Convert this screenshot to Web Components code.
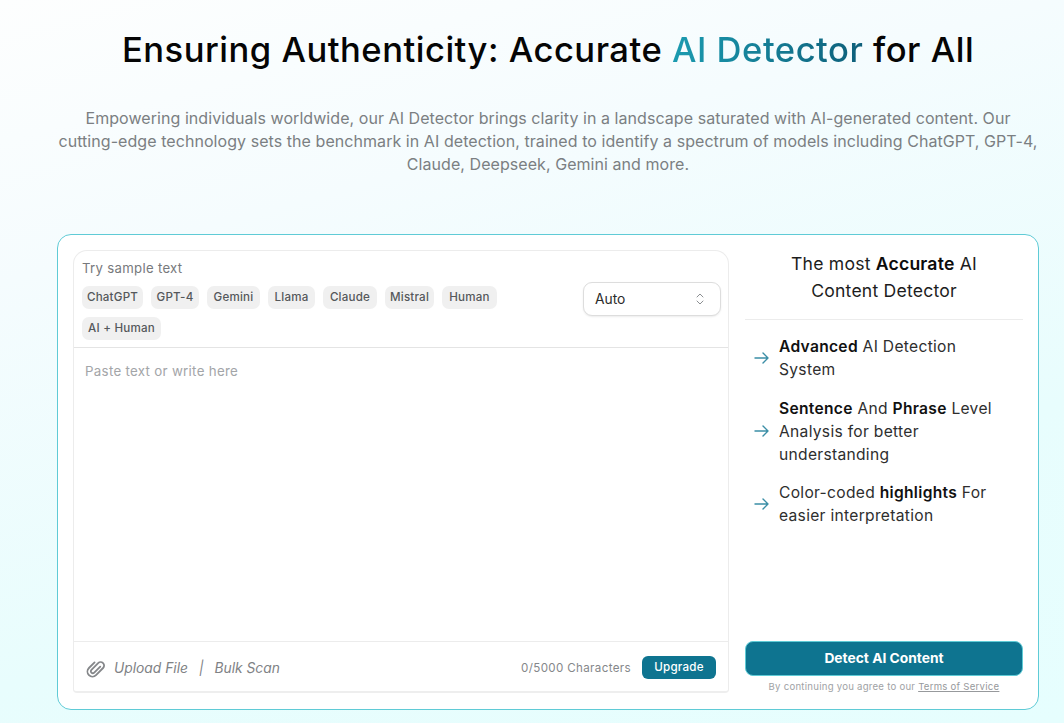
<!DOCTYPE html>
<html lang="en">
<head>
<meta charset="utf-8">
<title>AI Detector</title>
<style>
  html, body { margin: 0; height: 100%; }
  body {
    overflow: hidden;
    font-family: Inter, "Liberation Sans", sans-serif;
    background: linear-gradient(165deg, #fdfefe 0%, #f5fcfe 28%, #e8fdfd 68%, #e6fefe 100%);
  }
</style>
</head>
<body>
<detector-page>
  <detector-hero>
    <span slot="before">Ensuring Authenticity: Accurate </span>
    <span slot="accent">AI Detector</span>
    <span slot="after"> for All</span>
    Empowering individuals worldwide, our AI Detector brings clarity in a landscape saturated with AI-generated content. Our<br>cutting-edge technology sets the benchmark in AI detection, trained to identify a spectrum of models including ChatGPT, GPT-4,<br>Claude, Deepseek, Gemini and more.
  </detector-hero>
  <detector-card>
    <text-editor slot="editor">
      <sample-chip style="--w:61px">ChatGPT</sample-chip>
      <sample-chip style="--w:48px">GPT-4</sample-chip>
      <sample-chip style="--w:53px">Gemini</sample-chip>
      <sample-chip style="--w:47px">Llama</sample-chip>
      <sample-chip style="--w:54px">Claude</sample-chip>
      <sample-chip style="--w:49px">Mistral</sample-chip>
      <sample-chip style="--w:55px">Human</sample-chip>
      <sample-chip style="--w:79px">AI + Human</sample-chip>
    </text-editor>
    <side-panel slot="side">
      <feature-item><b>Advanced</b> AI Detection<br>System</feature-item>
      <feature-item><b>Sentence</b> And <b>Phrase</b> Level<br>Analysis for better<br>understanding</feature-item>
      <feature-item>Color-coded <b>highlights</b> For<br>easier interpretation</feature-item>
    </side-panel>
  </detector-card>
</detector-page>

<script>
// tiny helper so every class reads the same
function shadow(el, html) {
  el.attachShadow({ mode: 'open' }).innerHTML = html;
}

class DetectorPage extends HTMLElement {
  constructor() {
    super();
    shadow(this, `
      <style>
        :host { display: flex; flex-direction: column; padding: 0 25px 0 57px; height: 723px; box-sizing: border-box; }
      </style>
      <slot></slot>`);
  }
}

class DetectorHero extends HTMLElement {
  constructor() {
    super();
    shadow(this, `
      <style>
        :host { display: block; text-align: center; }
        h1 {
          margin: 0; padding-top: 26px; height: 47px; line-height: 47px;
          font-size: 34.6px; font-weight: 500; color: #050505; white-space: pre;
          letter-spacing: 0.5px;
        }
        .accent {
          background: linear-gradient(90deg, #1b9bb0, #0e5f7a);
          -webkit-background-clip: text; background-clip: text; color: transparent;
        }
        p {
          margin: 34px -4px 0; height: 127px;
          font-size: 16px; letter-spacing: 0.06px; line-height: 23px; color: #7b7f82;
        }
      </style>
      <h1><slot name="before"></slot><span class="accent"><slot name="accent"></slot></span><slot name="after"></slot></h1>
      <p><slot></slot></p>`);
  }
}

class DetectorCard extends HTMLElement {
  constructor() {
    super();
    shadow(this, `
      <style>
        :host {
          display: flex; gap: 16px; height: 476px; box-sizing: border-box;
          padding: 15px 15px 16px; background: #fff;
          border: 1px solid #5fcbd6; border-radius: 14px;
        }
        ::slotted([slot=editor]) { flex: 0 0 656px; }
        ::slotted([slot=side]) { flex: 1; min-width: 0; }
      </style>
      <slot name="editor"></slot>
      <slot name="side"></slot>`);
  }
}

class TextEditor extends HTMLElement {
  constructor() {
    super();
    shadow(this, `
      <style>
        :host {
          display: flex; flex-direction: column; box-sizing: border-box;
          border: 1px solid #ececec; border-radius: 14px 14px 4px 4px;
          border-bottom: 2px solid #eeeeee;
        }
        .top { display: flex; height: 97px; box-sizing: border-box; padding: 8px 7px 0 8px; border-bottom: 1px solid #e4e4e4; }
        .samples { flex: 1; min-width: 0; }
        .label { font-size: 13.2px; letter-spacing: 0.3px; line-height: 18px; color: #77797c; }
        .chips { display: flex; flex-wrap: wrap; gap: 8px; margin-top: 9px; width: 450px; }
        lang-select { margin-top: 23px; }
        .body { flex: 1; padding: 15px 11px; font-size: 13.3px; letter-spacing: 0.3px; line-height: 17px; color: #a3a5a8; }
        .foot {
          display: flex; align-items: center; height: 50px; box-sizing: border-box;
          padding: 2px 12px 0 12px; border-top: 1px solid #ececec;
          font-size: 13.8px; color: #808285; font-style: italic;
        }
        svg { display: block; margin-right: 8px; }
        .sep { margin: 0 11px; }
        .count { margin-left: auto; margin-right: 11px; font-style: normal; font-size: 11.6px; letter-spacing: 0.35px; color: #85878a; }
        .up {
          font-style: normal; background: #0e7490; color: #fff; font-size: 11.6px; font-weight: 500; letter-spacing: 0.2px;
          width: 74px; height: 23px; line-height: 23px; text-align: center; border-radius: 6px;
        }
      </style>
      <div class="top">
        <div class="samples">
          <div class="label">Try sample text</div>
          <div class="chips"><slot></slot></div>
        </div>
        <lang-select>Auto</lang-select>
      </div>
      <div class="body">Paste text or write here</div>
      <div class="foot">
        <svg width="20" height="20" viewBox="0 0 20 20" fill="none" stroke="#85878a" stroke-width="1.8" stroke-linecap="round" stroke-linejoin="round"><path transform="rotate(45 10 10)" d="M12 6V14.5a2 2 0 0 1-4 0V5a3.5 3.5 0 0 1 7 0V15a5 5 0 0 1-10 0V7"/></svg>
        <span>Upload File</span><span class="sep">|</span><span>Bulk Scan</span>
        <span class="count">0/5000 Characters</span>
        <span class="up">Upgrade</span>
      </div>`);
  }
}

class SampleChip extends HTMLElement {
  constructor() {
    super();
    shadow(this, `
      <style>
        :host {
          display: block; width: var(--w); height: 23px; line-height: 23px; text-align: center;
          background: #f0f0f0; border-radius: 7px;
          font-size: 11.6px; letter-spacing: 0.2px; font-weight: 500; color: #55585b; white-space: nowrap;
        }
      </style>
      <slot></slot>`);
  }
}

class LangSelect extends HTMLElement {
  constructor() {
    super();
    shadow(this, `
      <style>
        :host {
          display: flex; align-items: center; justify-content: space-between;
          width: 138px; height: 34px; box-sizing: border-box; padding: 0 15px 0 11px;
          border: 1px solid #dddddd; border-radius: 9px; box-shadow: 0 1px 2px rgba(0,0,0,.08);
          font-size: 13.8px; color: #2b2b2b; background: #fff;
        }
      </style>
      <slot></slot>
      <svg width="10" height="14" viewBox="0 0 10 14" fill="none" stroke="#8c8f92" stroke-width="1" stroke-linecap="round" stroke-linejoin="round"><path d="M2 5l3-3 3 3M2 9l3 3 3-3"/></svg>`);
  }
}

class SidePanel extends HTMLElement {
  constructor() {
    super();
    shadow(this, `
      <style>
        :host { display: flex; flex-direction: column; }
        h2 {
          margin: 0; height: 70px; box-sizing: border-box;
          border-bottom: 1px solid #ececec; text-align: center;
          font-size: 17.6px; letter-spacing: 0.2px; line-height: 27px; font-weight: 400; color: #1d1d1d;
        }
        h2 b { font-weight: 600; color: #0c0c0c; }
        .list { display: flex; flex-direction: column; gap: 15.5px; padding-top: 15px; flex: 1; }
        button {
          font: inherit; display: block; width: 100%; height: 35px; padding: 0 0 2px; border: 1px solid #5fcbd6;
          border-radius: 8px; background: #0e7490; color: #fff; font-size: 13.8px; font-weight: 700;
        }
        small { display: block; margin: 5px 0 0; text-align: center; font-size: 9.6px; letter-spacing: 0.25px; line-height: 12px; color: #a0a2a5; }
        u { color: #97999c; }
      </style>
      <h2>The most <b>Accurate</b> AI<br>Content Detector</h2>
      <div class="list"><slot></slot></div>
      <button>Detect AI Content</button>
      <small>By continuing you agree to our <u>Terms of Service</u></small>`);
  }
}

class FeatureItem extends HTMLElement {
  constructor() {
    super();
    shadow(this, `
      <style>
        :host { display: flex; align-items: center; gap: 7px; padding-left: 7px; font-size: 15.6px; letter-spacing: 0.3px; line-height: 23px; color: #2e2e2e; }
        svg { flex: none; display: block; }
        ::slotted(b) { font-weight: 600; color: #111; }
      </style>
      <svg width="20" height="16" viewBox="0 0 20 16" fill="none" stroke="#3b8ea6" stroke-width="1.4" stroke-linecap="round" stroke-linejoin="round"><path d="M3 8h13M11 3l5 5-5 5"/></svg>
      <div><slot></slot></div>`);
  }
}

customElements.define('detector-page', DetectorPage);
customElements.define('detector-hero', DetectorHero);
customElements.define('detector-card', DetectorCard);
customElements.define('text-editor', TextEditor);
customElements.define('sample-chip', SampleChip);
customElements.define('lang-select', LangSelect);
customElements.define('side-panel', SidePanel);
customElements.define('feature-item', FeatureItem);
</script>
</body>
</html>
